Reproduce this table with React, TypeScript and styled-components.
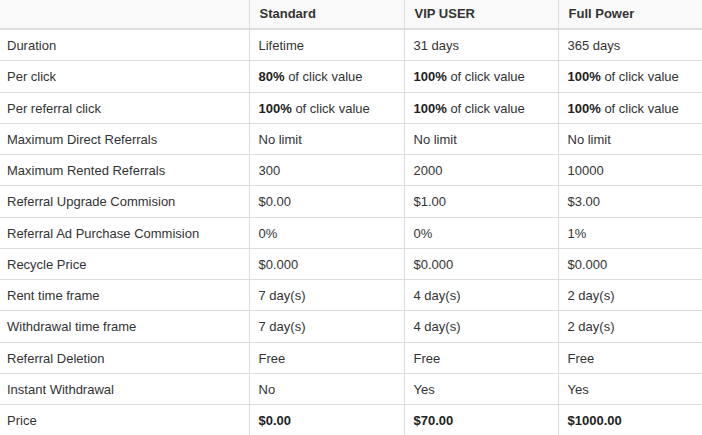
import React from "react";
import styled, { createGlobalStyle } from "styled-components";

const Global = createGlobalStyle`
  html, body { margin: 0; padding: 0; background: #fff; }
  body { font-family: Arial, "Liberation Sans", sans-serif; color: #333; overflow: hidden; }
`;

const Table = styled.table`
  width: 702px;
  border-collapse: collapse;
  table-layout: fixed;
  font-size: 13px;
`;

const HeadCell = styled.th`
  background: #f9f9f9;
  font-weight: bold;
  text-align: left;
  padding: 7px 9px 7px 10px;
  line-height: 14px;
  border-bottom: 2px solid #ddd;
  border-left: 1px solid #ddd;
  color: #333;
  &:first-child { border-left: none; padding-left: 7px; }
`;

const Cell = styled.td`
  padding: 9px 9px 7px 9px;
  line-height: 14.27px;
  border-top: 1px solid #ddd;
  border-left: 1px solid #ddd;
  white-space: nowrap;
  vertical-align: middle;
  &:first-child { border-left: none; padding-left: 7px; }
`;

const Strong = styled.b`
  font-weight: bold;
  color: #222;
`;

type Row = { label: string; values: React.ReactNode[] };

const pct = (n: string) => (
  <>
    <Strong>{n}%</Strong> of click value
  </>
);

const rows: Row[] = [
  { label: "Duration", values: ["Lifetime", "31 days", "365 days"] },
  { label: "Per click", values: [pct("80"), pct("100"), pct("100")] },
  { label: "Per referral click", values: [pct("100"), pct("100"), pct("100")] },
  { label: "Maximum Direct Referrals", values: ["No limit", "No limit", "No limit"] },
  { label: "Maximum Rented Referrals", values: ["300", "2000", "10000"] },
  { label: "Referral Upgrade Commision", values: ["$0.00", "$1.00", "$3.00"] },
  { label: "Referral Ad Purchase Commision", values: ["0%", "0%", "1%"] },
  { label: "Recycle Price", values: ["$0.000", "$0.000", "$0.000"] },
  { label: "Rent time frame", values: ["7 day(s)", "4 day(s)", "2 day(s)"] },
  { label: "Withdrawal time frame", values: ["7 day(s)", "4 day(s)", "2 day(s)"] },
  { label: "Referral Deletion", values: ["Free", "Free", "Free"] },
  { label: "Instant Withdrawal", values: ["No", "Yes", "Yes"] },
  {
    label: "Price",
    values: [<Strong>$0.00</Strong>, <Strong>$70.00</Strong>, <Strong>$1000.00</Strong>],
  },
];

export default function App() {
  return (
    <>
      <Global />
      <Table>
        <colgroup>
          <col style={{ width: 249 }} />
          <col style={{ width: 155 }} />
          <col style={{ width: 154 }} />
          <col style={{ width: 144 }} />
        </colgroup>
        <thead>
          <tr>
            <HeadCell></HeadCell>
            <HeadCell>Standard</HeadCell>
            <HeadCell>VIP USER</HeadCell>
            <HeadCell>Full Power</HeadCell>
          </tr>
        </thead>
        <tbody>
          {rows.map((r) => (
            <tr key={r.label}>
              <Cell>{r.label}</Cell>
              {r.values.map((v, i) => (
                <Cell key={i}>{v}</Cell>
              ))}
            </tr>
          ))}
        </tbody>
      </Table>
    </>
  );
}
